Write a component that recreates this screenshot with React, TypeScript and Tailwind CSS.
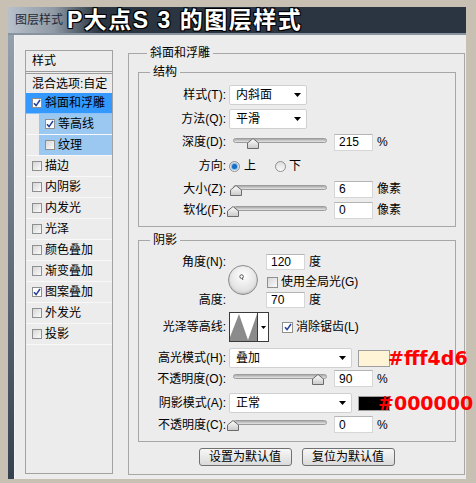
import React from "react";

const effects = [
  { name: "斜面和浮雕", checked: true, state: "active" },
  { name: "等高线", checked: true, state: "sub" },
  { name: "纹理", checked: false, state: "sub" },
  { name: "描边", checked: false, state: "" },
  { name: "内阴影", checked: false, state: "" },
  { name: "内发光", checked: false, state: "" },
  { name: "光泽", checked: false, state: "" },
  { name: "颜色叠加", checked: false, state: "" },
  { name: "渐变叠加", checked: false, state: "" },
  { name: "图案叠加", checked: true, state: "" },
  { name: "外发光", checked: false, state: "" },
  { name: "投影", checked: false, state: "" },
];

function Box({ checked = false, big = false }: { checked?: boolean; big?: boolean }) {
  return (
    <span
      className={`flex shrink-0 items-center justify-center border border-[#8e8f8f] ${big ? "h-[11px] w-[11px]" : "h-[10px] w-[10px]"} ${
        checked ? "bg-white" : "bg-linear-to-br from-[#d6d6d6] to-[#fbfbfb]"
      }`}
    >
      {checked && (
        <svg width="8" height="8" viewBox="0 0 8 8">
          <path d="M1 4.2 L3.1 6.6 L7 1" fill="none" stroke="#22409a" strokeWidth="1.5" />
        </svg>
      )}
    </span>
  );
}

function Radio({ on = false }: { on?: boolean }) {
  return (
    <span className="flex h-[11px] w-[11px] shrink-0 items-center justify-center rounded-full border border-[#8e8e8e] bg-linear-to-b from-[#dedede] to-[#fafafa]">
      {on && <span className="h-[5px] w-[5px] rounded-full bg-[#1a6cc2] shadow-[0_0_1px_1px_#6fb4ec]" />}
    </span>
  );
}

function Arrow() {
  return (
    <svg width="7" height="4" viewBox="0 0 7 4">
      <path d="M0 0 L7 0 L3.5 4 Z" fill="#000" />
    </svg>
  );
}

function Select({ value, w }: { value: string; w: string }) {
  return (
    <div className={`ml-[3px] flex h-[20px] shrink-0 items-center justify-between rounded-[2px] border border-[#d0d0d0] bg-white pl-[6px] pr-[5px] ${w}`}>
      <span>{value}</span>
      <Arrow />
    </div>
  );
}

function Slider({ pct }: { pct: number }) {
  return (
    <div className="relative ml-[7px] h-[17px] w-[94px] shrink-0">
      <div className="absolute left-0 right-0 top-[4px] h-[5px] rounded-full border border-[#9c9c9c] bg-linear-to-b from-[#a9a9a9] to-[#e6e6e6]" />
      <svg className="absolute top-[4px]" style={{ left: pct * 94 - 6 }} width="12" height="11" viewBox="0 0 12 11">
        <defs>
          <linearGradient id="thumb" x1="0" y1="0" x2="0" y2="1">
            <stop offset="0" stopColor="#ffffff" />
            <stop offset="1" stopColor="#c9c9c9" />
          </linearGradient>
        </defs>
        <path d="M6 0.5 L11.5 5 L11.5 10.5 L0.5 10.5 L0.5 5 Z" fill="url(#thumb)" stroke="#6b6b6b" />
      </svg>
    </div>
  );
}

function Field({ value, ml = "ml-[7px]", h = "h-[17px]" }: { value: string; ml?: string; h?: string }) {
  return (
    <div className={`flex w-[39px] shrink-0 items-center border border-[#d6d6d6] border-t-[#b4b4b4] bg-white pl-[4px] ${ml} ${h}`}>
      {value}
    </div>
  );
}

function Label({ children }: { children: React.ReactNode }) {
  return <span className="w-[87px] shrink-0 text-right">{children}</span>;
}

function SliderRow({ label, pct, value, unit, h = "h-[20px]", mt }: { label: string; pct: number; value: string; unit: string; h?: string; mt: string }) {
  return (
    <div className={`flex items-center ${h} ${mt}`}>
      <Label>{label}</Label>
      <Slider pct={pct} />
      <Field value={value} />
      <span className="ml-[4px]">{unit}</span>
    </div>
  );
}

export default function App() {
  return (
    <div className="h-[483px] w-[476px] overflow-hidden bg-[#c8c0b3] pl-[8px] pt-[7px] font-['Liberation_Sans','Noto_Sans_CJK_SC',sans-serif] text-[12px] text-black">
      <div className="flex w-[458px] flex-col">
        {/* title bar */}
        <div className="flex h-[26px] items-center bg-linear-to-r from-[#b8c1cb] from-0% via-[#8f9aa6] via-10% to-[#2b3542] to-20%">
          <span className="shrink-0 pl-[7px] text-[#1f2a37]">图层样式</span>
          <span className="ml-[4px] shrink-0 text-[23px] leading-none font-bold tracking-[1.5px] whitespace-nowrap text-white [text-shadow:-1px_-1px_0_#000,1px_-1px_0_#000,-1px_1px_0_#000,1px_1px_0_#000,0_0_2px_#000]">
            P大点S 3 的图层样式
          </span>
        </div>
        <div className="h-[2px] bg-[#8893a0]" />

        <div className="flex h-[444px]">
          <div className="w-[7px] border-r border-[#f4f4f4] bg-linear-to-b from-[#94a0ad] to-[#35414e]" />
          <div className="flex flex-1 items-start bg-[#ececec]">
            {/* style list */}
            <div className="ml-[10px] mt-[15px] h-[424px] w-[88px] shrink-0 border border-[#a2a2a2]">
              <div className="flex h-[23px] items-center border-b-[3px] border-double border-[#9c9c9c] pl-[6px]">样式</div>
              <div className="flex h-[19px] items-center pl-[6px]">混合选项:自定</div>
              {effects.map((e) =>
                e.state === "sub" ? (
                  <div key={e.name} className="flex h-[21px] border-b border-[#f8f8f8] pl-[13px]">
                    <div className="flex flex-1 items-center bg-[#9ac8f0] pl-[6px]">
                      <Box checked={e.checked} />
                      <span className="ml-[3px]">{e.name}</span>
                    </div>
                  </div>
                ) : (
                  <div
                    key={e.name}
                    className={`flex h-[21px] items-center border-b pl-[6px] ${e.state === "active" ? "border-[#8fc2f5] bg-[#3399ff]" : "border-[#f8f8f8]"}`}
                  >
                    <Box checked={e.checked} />
                    <span className="ml-[3px]">{e.name}</span>
                  </div>
                )
              )}
            </div>

            {/* bevel and emboss */}
            <fieldset className="ml-[15px] mt-[10px] w-[337px] min-w-0 shrink-0 border border-[#a7a7a7] pb-[8px]">
              <legend className="ml-[18px] px-[3px] leading-[16px]">斜面和浮雕</legend>

              <fieldset className="ml-[9px] mt-[3px] w-[318px] min-w-0 border border-[#a7a7a7] pb-[6px]">
                <legend className="ml-[11px] px-[3px] leading-[16px]">结构</legend>
                <div className="mt-[5px] flex h-[20px] items-center">
                  <Label>样式(T):</Label>
                  <Select value="内斜面" w="w-[78px]" />
                </div>
                <div className="mt-[4px] flex h-[20px] items-center">
                  <Label>方法(Q):</Label>
                  <Select value="平滑" w="w-[78px]" />
                </div>
                <SliderRow label="深度(D):" pct={0.215} value="215" unit="%" mt="mt-[3px]" />
                <div className="mt-[4px] flex h-[20px] items-center">
                  <Label>方向:</Label>
                  <span className="ml-[3px]">
                    <Radio on />
                  </span>
                  <span className="ml-[4px]">上</span>
                  <span className="ml-[19px]">
                    <Radio />
                  </span>
                  <span className="ml-[3px]">下</span>
                </div>
                <SliderRow label="大小(Z):" pct={0.035} value="6" unit="像素" mt="mt-[3px]" />
                <SliderRow label="软化(F):" pct={0} value="0" unit="像素" mt="mt-[1px]" />
              </fieldset>

              <fieldset className="ml-[9px] mt-[5px] w-[318px] min-w-0 border border-[#a7a7a7] pb-[8px]">
                <legend className="ml-[11px] px-[3px] leading-[16px]">阴影</legend>

                <div className="mt-[6px] flex h-[54px]">
                  <div className="flex w-[87px] shrink-0 flex-col justify-between text-right">
                    <span className="leading-[16px]">角度(N):</span>
                    <span className="leading-[16px]">高度:</span>
                  </div>
                  <div className="ml-[2px] mt-[11px] flex h-[30px] w-[30px] items-center justify-center rounded-full border border-[#8c8c8c] bg-[radial-gradient(circle_at_50%_35%,#ffffff,#d2d2d2)] shadow-[inset_0_-1px_2px_#bdbdbd]">
                    <svg width="28" height="28" viewBox="0 0 28 28">
                      <line x1="14" y1="14" x2="13" y2="12" stroke="#555" strokeWidth="1" />
                      <circle cx="12.6" cy="10.6" r="1.8" fill="#fff" stroke="#555" strokeWidth="1" />
                    </svg>
                  </div>
                  <div className="ml-[8px] flex flex-col">
                    <div className="flex h-[16px] items-center">
                      <Field value="120" ml="ml-0" h="h-[16px]" />
                      <span className="ml-[4px]">度</span>
                    </div>
                    <div className="mt-[5px] flex h-[14px] items-center pl-[1px]">
                      <Box big />
                      <span className="ml-[3px]">使用全局光(G)</span>
                    </div>
                    <div className="mt-[3px] flex h-[16px] items-center">
                      <Field value="70" ml="ml-0" h="h-[16px]" />
                      <span className="ml-[4px]">度</span>
                    </div>
                  </div>
                </div>

                <div className="mt-[4px] flex h-[30px] items-center">
                  <Label>光泽等高线:</Label>
                  <div className="ml-[3px] flex h-[30px] w-[40px] shrink-0 border border-[#3a3a3a] bg-white">
                    <svg width="27" height="28" viewBox="0 0 27 28">
                      <path d="M0 28 L0 24 L9 1 L18 27 L27 1 L27 28 Z" fill="#8b8b8b" />
                    </svg>
                    <div className="flex flex-1 items-center justify-center border-l border-[#3a3a3a]">
                      <svg width="5" height="3" viewBox="0 0 5 3">
                        <path d="M0 0 L5 0 L2.5 3 Z" fill="#000" />
                      </svg>
                    </div>
                  </div>
                  <span className="ml-[13px]">
                    <Box checked big />
                  </span>
                  <span className="ml-[3px]">消除锯齿(L)</span>
                </div>

                <div className="mt-[6px] flex h-[20px] items-center">
                  <Label>高光模式(H):</Label>
                  <Select value="叠加" w="w-[123px]" />
                  <span className="ml-[6px] h-[17px] w-[32px] shrink-0 border border-[#9f9f9f] bg-[#fff4d6]" />
                  <span className="relative z-10 ml-[-2px] shrink-0 font-['DejaVu_Sans',sans-serif] text-[19px] leading-none font-bold whitespace-nowrap text-[#ff0000]">
                    #fff4d6
                  </span>
                </div>
                <SliderRow label="不透明度(O):" pct={0.9} value="90" unit="%" h="h-[17px]" mt="mt-[2px]" />
                <div className="mt-[6px] flex h-[20px] items-center">
                  <Label>阴影模式(A):</Label>
                  <Select value="正常" w="w-[123px]" />
                  <span className="ml-[6px] h-[15px] w-[32px] shrink-0 border border-[#9f9f9f] bg-black" />
                  <span className="relative z-10 ml-[-12px] shrink-0 font-['DejaVu_Sans',sans-serif] text-[19px] leading-none font-bold whitespace-nowrap text-[#ff0000]">
                    #000000
                  </span>
                </div>
                <SliderRow label="不透明度(C):" pct={0} value="0" unit="%" h="h-[17px]" mt="mt-[3px]" />
              </fieldset>

              <div className="mt-[6px] flex justify-center gap-[10px]">
                <button className="flex h-[18px] w-[93px] items-center justify-center rounded-[3px] border border-[#707070] bg-linear-to-b from-[#f7f7f7] to-[#dadada]">
                  设置为默认值
                </button>
                <button className="flex h-[18px] w-[93px] items-center justify-center rounded-[3px] border border-[#707070] bg-linear-to-b from-[#f7f7f7] to-[#dadada]">
                  复位为默认值
                </button>
              </div>
            </fieldset>
          </div>
        </div>
      </div>
    </div>
  );
}
